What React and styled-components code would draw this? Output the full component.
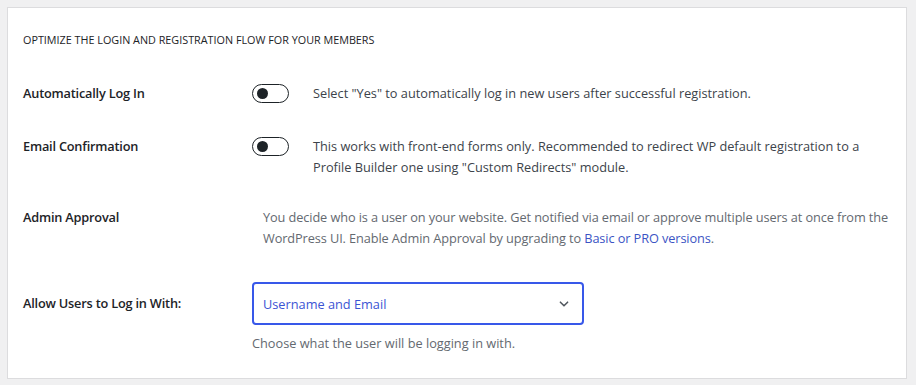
import React from "react";
import styled, { createGlobalStyle } from "styled-components";

const Global = createGlobalStyle`
  html, body { margin: 0; padding: 0; }
  body {
    background: #f0f0f1;
    font-family: "Open Sans", "Noto Sans", sans-serif;
    color: #1d2327;
  }
`;

const Page = styled.div`
  padding: 7px 9px 6px 7px;
`;

const Panel = styled.div`
  background: #fff;
  border: 1px solid #dcdcde;
  padding: 25px 15px 20px 15px;
  box-sizing: border-box;
  height: 372px;
`;

const Heading = styled.h3`
  margin: 0 0 36px;
  font-size: 10.8px;
  font-weight: 400;
  text-transform: uppercase;
  line-height: 14px;
  color: #1d2327;
`;

const Row = styled.div`
  display: grid;
  grid-template-columns: 229px 1fr;
  align-items: start;
  margin-bottom: ${(p) => p.$mb || 0}px;
`;

const Label = styled.div`
  font-size: 12.75px;
  font-weight: 600;
  letter-spacing: -0.2px;
  line-height: 21px;
  padding-top: ${(p) => p.$pt || 0}px;
  color: #1d2327;
`;

const ToggleWrap = styled.div`
  display: flex;
  align-items: flex-start;
  gap: 24px;
`;

const Toggle = styled.span`
  flex: none;
  width: 37px;
  height: 19px;
  box-sizing: border-box;
  border: 1.5px solid #1d2327;
  border-radius: 10px;
  display: flex;
  align-items: center;
  padding-left: 4px;
  margin-top: 1px;
  &::before {
    content: "";
    width: 11px;
    height: 11px;
    border-radius: 50%;
    background: #1d2327;
  }
`;

const Desc = styled.p`
  margin: 0;
  font-size: 12.75px;
  line-height: 21px;
  color: ${(p) => (p.$muted ? "#646970" : "#3c434a")};
  padding-left: ${(p) => p.$pl || 0}px;
  max-width: ${(p) => p.$mw || 560}px;
  margin-right: ${(p) => p.$mr || 0}px;
  letter-spacing: ${(p) => p.$ls || 0}px;
`;

const Link = styled.a`
  color: #3b54c4;
  text-decoration: none;
`;

const SelectBox = styled.div`
  width: 332px;
  height: 43px;
  box-sizing: border-box;
  border: 2px solid #3858e9;
  border-radius: 4px;
  display: flex;
  align-items: center;
  justify-content: space-between;
  padding: 0 12px 0 9px;
  font-size: 12.75px;
  color: #3b54d4;
`;

const Control = styled.div`
  display: flex;
  flex-direction: column;
  gap: 8px;
`;

const Chevron = () => (
  <svg width="12" height="12" viewBox="0 0 20 20" fill="none">
    <path d="M4 7l6 6 6-6" stroke="#50575e" strokeWidth="2.6" strokeLinecap="round" strokeLinejoin="round" />
  </svg>
);

export default function App() {
  return (
    <>
      <Global />
      <Page>
        <Panel>
          <Heading>Optimize the login and registration flow for your members</Heading>
          <Row $mb={32}>
            <Label>Automatically Log In</Label>
            <ToggleWrap>
              <Toggle />
              <Desc>Select "Yes" to automatically log in new users after successful registration.</Desc>
            </ToggleWrap>
          </Row>
          <Row $mb={29}>
            <Label>Email Confirmation</Label>
            <ToggleWrap>
              <Toggle />
              <Desc $mw={552}>
                This works with front-end forms only. Recommended to redirect WP default registration to a Profile Builder one using "Custom Redirects" module.
              </Desc>
            </ToggleWrap>
          </Row>
          <Row $mb={33}>
            <Label>Admin Approval</Label>
            <Desc $muted $pl={11} $mw={680} $mr={-15} $ls={-0.1}>
              You decide who is a user on your website. Get notified via email or approve multiple users at once from the WordPress UI. Enable Admin Approval by upgrading to <Link href="#">Basic or PRO versions</Link>.
            </Desc>
          </Row>
          <Row>
            <Label $pt={11}>Allow Users to Log in With:</Label>
            <Control>
              <SelectBox>
                <span>Username and Email</span>
                <Chevron />
              </SelectBox>
              <Desc $muted>Choose what the user will be logging in with.</Desc>
            </Control>
          </Row>
        </Panel>
      </Page>
    </>
  );
}
